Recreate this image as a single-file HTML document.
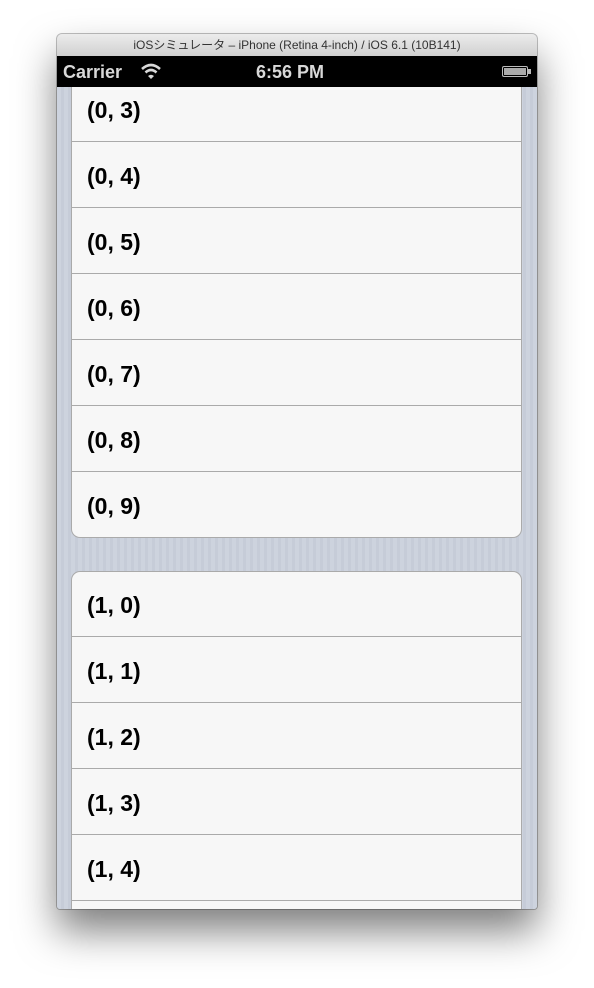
<!DOCTYPE html>
<html><head><meta charset="utf-8"><style>
body{margin:0;width:594px;height:988px;background:#fff;position:relative;overflow:hidden;font-family:"Liberation Sans",sans-serif}
.win{position:absolute;left:57px;top:34px;width:480px;height:875px;border-radius:5px 5px 3px 3px;box-shadow:0 22px 40px rgba(0,0,0,.5),0 0 0 1px rgba(0,0,0,.25);overflow:hidden;background:#cbd2dd}
.title{position:absolute;left:0;top:0;width:480px;height:22px;background:linear-gradient(#ececec,#d0d0d0);font-family:"Liberation Sans","Noto Sans CJK JP",sans-serif;font-size:12px;color:#333;text-align:center;line-height:23px}
.status{position:absolute;left:0;top:22px;width:480px;height:31px;background:#000;color:#d8d8d8;font-weight:bold;font-size:18px}
.content{position:absolute;left:0;top:53px;width:480px;height:822px;overflow:hidden;background:repeating-linear-gradient(90deg,#cdd3de 0 4px,#c6ccd8 4px 7px)}
.r{position:absolute;left:72px;width:449px;font-weight:bold;font-size:23px;color:#000;padding-left:15px;box-sizing:border-box;line-height:26px}
.s{position:absolute;left:72px;width:449px;height:1px;background:#aaa}
</style></head><body>
<div class="win">
<div class="title">iOSシミュレータ – iPhone (Retina 4-inch) / iOS 6.1 (10B141)</div>
<div class="status">
<span style="position:absolute;left:6px;top:6px">Carrier</span>
<svg style="position:absolute;left:83px;top:7px" width="22" height="17" viewBox="0 0 22 17"><path d="M2 6Q11-2 20 6" stroke="#d8d8d8" stroke-width="2.6" fill="none"/><path d="M5.5 9.5Q11 4.5 16.5 9.5" stroke="#d8d8d8" stroke-width="2.6" fill="none"/><path d="M8 13L11 16L14 13Q11 10.5 8 13Z" fill="#d8d8d8"/></svg>
<span style="position:absolute;left:199px;top:6px">6:56 PM</span>
<div style="position:absolute;left:445px;top:10px;width:26px;height:11px;border:1.5px solid #bbb;border-radius:2px;box-sizing:border-box;background:#aaa;box-shadow:inset 0 0 0 1px #000"></div>
<div style="position:absolute;left:471px;top:13px;width:3px;height:5px;background:#bbb"></div>
</div>
<div class="content">
<div style="position:absolute;left:14px;top:-10px;width:451px;height:461px;background:#f7f7f7;border:1px solid #aaa;border-top:none;border-radius:0 0 9px 9px;box-sizing:border-box"></div>
<div style="position:absolute;left:14px;top:484px;width:451px;height:400px;background:#f7f7f7;border:1px solid #aaa;border-bottom:none;border-radius:9px 9px 0 0;box-sizing:border-box"></div>
</div>
</div>
<div class="r" style="top:97px">(0, 3)</div><div class="s" style="top:141px"></div>
<div class="r" style="top:163px">(0, 4)</div><div class="s" style="top:207px"></div>
<div class="r" style="top:229px">(0, 5)</div><div class="s" style="top:273px"></div>
<div class="r" style="top:295px">(0, 6)</div><div class="s" style="top:339px"></div>
<div class="r" style="top:361px">(0, 7)</div><div class="s" style="top:405px"></div>
<div class="r" style="top:427px">(0, 8)</div><div class="s" style="top:471px"></div>
<div class="r" style="top:493px">(0, 9)</div>
<div class="r" style="top:592px">(1, 0)</div><div class="s" style="top:636px"></div>
<div class="r" style="top:658px">(1, 1)</div><div class="s" style="top:702px"></div>
<div class="r" style="top:724px">(1, 2)</div><div class="s" style="top:768px"></div>
<div class="r" style="top:790px">(1, 3)</div><div class="s" style="top:834px"></div>
<div class="r" style="top:856px">(1, 4)</div><div class="s" style="top:900px"></div>
</body></html>
